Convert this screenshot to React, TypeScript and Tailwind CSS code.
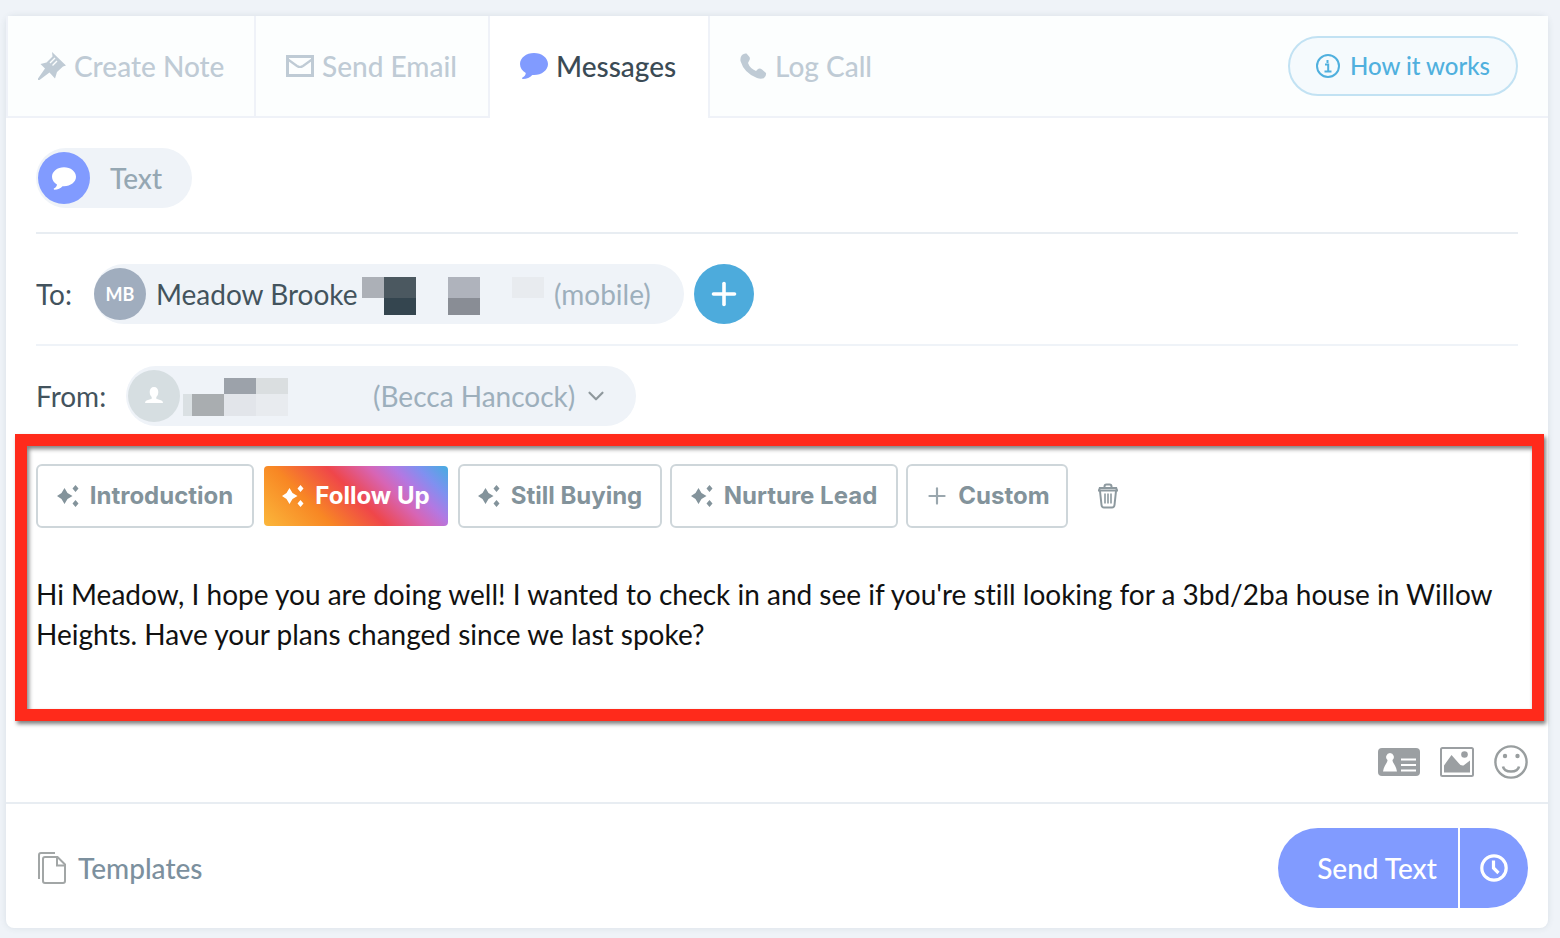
import { useState } from 'react';
import { ChevronDown, Plus } from 'lucide-react';

const TABS = [
  { label: 'Create Note', width: 'w-[250px] border-l-2' },
  { label: 'Send Email', width: 'w-[234px]' },
  { label: 'Messages', width: 'w-[220px]' },
  { label: 'Log Call', width: '' },
];

const PROMPTS = [
  { label: 'Introduction', width: 'w-[218px]' },
  { label: 'Follow Up', width: 'w-[188px]' },
  { label: 'Still Buying', width: 'w-[204px]' },
  { label: 'Nurture Lead', width: 'w-[228px]' },
];

const MESSAGE =
  "Hi Meadow, I hope you are doing well! I wanted to check in and see if you're still looking for a 3bd/2ba house in Willow Heights. Have your plans changed since we last spoke?";

const Pin = () => (
  <svg width="28" height="28" viewBox="0 0 28 28" fill="currentColor">
    <path d="M14 0l14 13.500-3 1-6 5.500-2 6.500-5.500-6L1.500 28H0v-1.500l7-10L2.500 12l6-1.500 6-6z" />
    <path d="M12 11l5-5M14.500 13.500l4.500-4.500" stroke="#fcfefe" strokeWidth="1.400" />
  </svg>
);

const Envelope = () => (
  <svg width="28" height="22" viewBox="0 0 28 22" fill="none" stroke="currentColor" strokeWidth="3">
    <path d="M1.500 1.500h25v19h-25z" />
    <path d="M2 4.500l9 6.500q3 2 6 0l9-6.500" strokeWidth="2.200" />
  </svg>
);

const Bubble = ({ className }: { className: string }) => (
  <svg viewBox="0 0 28 26" fill="currentColor" className={className}>
    <path d="M14 0C6.300 0 0 4.900 0 11c0 3.900 2.300 7 5.800 9-.2 2-1.300 3.700-3.600 4.800-.4.500-.1 1.200.6 1.200 4 0 7.200-1.200 9.500-4h1.700c7.700 0 14-4.900 14-11S21.700 0 14 0z" />
  </svg>
);

const Phone = () => (
  <svg width="27" height="27" viewBox="0 0 27 27" fill="currentColor">
    <path d="M2 2Q4 0 6.500.5L9.500 4Q10.500 6 9 8L8 10Q10 15.500 16 18L18 16Q20 15 22 16.500L26 20Q26.500 23 24 25 21 26.500 17 25 4 20 .5 8 0 4 2 2z" />
  </svg>
);

const Sparkles = () => (
  <svg width="23" height="22" viewBox="0 0 23 22" fill="currentColor">
    <path d="M7.500 3l3 5 5 3-5 3-3 5-3-5-4.500-3 4.500-3z" />
    <path d="M18.500 0l3 3.500-3 3.500-3-3.500zM18.500 15l3 3.500-3 3.500-3-3.500z" />
  </svg>
);

const Trash = () => (
  <svg width="22" height="26" viewBox="0 0 22 26" fill="none" stroke="currentColor" strokeWidth="2">
    <path d="M1 7.500h20M2 7.500l.8-2.500h16.400l.8 2.500M7.500 5V3.500q0-2 2-2h3q2 0 2 2V5" />
    <path d="M3 8l1.500 14q.3 2.500 2.500 2.500h8q2.200 0 2.500-2.500L19 8" />
    <path d="M8 10.500v10M11 10.500v10M14 10.500v10" strokeWidth="1.600" />
  </svg>
);

const ContactCard = () => (
  <svg width="42" height="28" viewBox="0 0 42 28">
    <rect width="42" height="28" rx="4" fill="#9b9fa2" />
    <path d="M12 5a4 4 0 0 1 2.500 7c-.3 2.500 3.500 5 4.500 11.500H5C6 17 9.800 14.500 9.500 12A4 4 0 0 1 12 5z" fill="#fff" />
    <path d="M23 11.500h15M23 17h15M23 22.500h15" stroke="#fff" strokeWidth="2" />
  </svg>
);

const Picture = () => (
  <svg width="34" height="30" viewBox="0 0 34 30">
    <rect x="1" y="1" width="32" height="28" rx="1.500" fill="none" stroke="#9b9fa2" strokeWidth="2" />
    <circle cx="24.500" cy="7.500" r="3.300" fill="#9b9fa2" />
    <path d="M4 25.500v-7L11.500 8l7.500 8.500q1.500 2.500 4.500 2l6.500-5v12z" fill="#9b9fa2" />
  </svg>
);

const Smiley = () => (
  <svg width="34" height="34" viewBox="0 0 34 34" fill="none" stroke="#999e9f" strokeWidth="2.400">
    <circle cx="17" cy="17" r="15.600" />
    <circle cx="11" cy="11" r="2.200" fill="#999e9f" stroke="none" />
    <circle cx="23.500" cy="11" r="2.200" fill="#999e9f" stroke="none" />
    <path d="M9 21.500q1 5 8 5t8-5" strokeWidth="2.600" />
  </svg>
);

const Documents = () => (
  <svg width="28" height="32" viewBox="0 0 28 32" fill="none" stroke="#a2a6a6" strokeWidth="2">
    <path d="M1 27V3q0-2 2-2h14" />
    <path d="M7 5h12.500l7.500 7.500V29q0 2-2 2H7q-2 0-2-2V7q0-2 2-2z" />
    <path d="M19 5v8.500h8" />
  </svg>
);

const TabIcon = ({ label }: { label: string }) => {
  if (label === 'Create Note') return <Pin />;
  if (label === 'Send Email') return <Envelope />;
  if (label === 'Messages') return <Bubble className="w-7 h-[26px] text-[#819bff]" />;
  return <Phone />;
};

export default function App() {
  const [tab, setTab] = useState('Messages');
  const [prompt, setPrompt] = useState('Follow Up');
  const [text, setText] = useState(MESSAGE);

  return (
    <div className="min-h-screen bg-[#eff3f8] pt-4 pb-2.5 pl-1.5 pr-3 font-[Lato,sans-serif] text-[28px] leading-10 [font-variant-ligatures:none]">
      <main className="bg-white rounded-lg shadow-[0_0_6px_rgba(60,80,100,0.12)]">
        <nav className="flex h-[102px]">
          {TABS.map((t) => (
            <button
              key={t.label}
              onClick={() => setTab(t.label)}
              className={`flex items-center gap-2 pl-[30px] font-medium border-[#eff2f8] ${t.width} ${t.label === 'Log Call' ? 'grow' : 'border-r-2'} ${
                t.label === tab ? 'pb-0.5 text-[#3b4b55]' : 'bg-[#fcfefe] border-b-2 text-[#bfcbd5]'
              }`}
            >
              <TabIcon label={t.label} />
              {t.label}
            </button>
          ))}
          <div className="flex items-center pr-[30px] bg-[#fcfefe] border-b-2 border-[#eff2f8]">
            <button className="flex items-center justify-center gap-2.5 w-[230px] h-[60px] rounded-full border-2 border-[#c2e2f3] bg-[#f5fafd] text-[#50b0de] text-2xl font-medium">
              <svg width="24" height="24" viewBox="0 0 24 24" fill="none" stroke="currentColor" strokeWidth="2">
                <circle cx="12" cy="12" r="11" />
                <path d="M9 10.500h3.200V17M8.500 17.500h7M11.500 6v3" />
              </svg>
              How it works
            </button>
          </div>
        </nav>

        <div className="px-[30px]">
          <div className="pt-[30px] pb-6 border-b-2 border-[#e8edf2]">
            <button className="flex items-center gap-5 h-[60px] pl-0.5 pr-[30px] rounded-full bg-[#eff3f8] text-[#95a7b3] font-medium">
              <span className="flex items-center justify-center size-[52px] rounded-full bg-[#819bff] text-white">
                <Bubble className="w-6 h-[23px]" />
              </span>
              Text
            </button>
          </div>

          <div className="flex items-center pt-[30px] pb-5 border-b-2 border-[#eff3f8] text-[#43535d]">
            <span className="w-[58px]">To:</span>
            <div className="flex items-center w-[590px] h-[60px] rounded-full bg-[#eff3f8]">
              <span className="flex items-center justify-center size-[52px] rounded-full bg-[#a0adbe] text-white text-lg font-bold">MB</span>
              <span className="w-[216px] pl-2.5 whitespace-nowrap">Meadow Brooke</span>
              <div className="grid grid-cols-[22px_32px_32px_32px_32px_32px] grid-rows-[21px_17px] mt-1">
                <i className="bg-[#acb0b7]" />
                <i className="bg-[#4b5860]" />
                <i />
                <i className="bg-[#afb3bc]" />
                <i />
                <i className="bg-[#e8ebef]" />
                <i />
                <i className="bg-[#34454f]" />
                <i />
                <i className="bg-[#898d95]" />
              </div>
              <span className="pl-2.5 text-[#9dafbc]">(mobile)</span>
            </div>
            <button aria-label="Add recipient" className="flex items-center justify-center size-[60px] ml-2.5 rounded-full bg-[#4dabdc] text-white">
              <Plus size={36} strokeWidth={2.400} />
            </button>
          </div>

          <div className="flex items-center pt-5 text-[#43535d]">
            <span className="w-[90px]">From:</span>
            <button className="flex items-center w-[510px] h-[60px] pl-0.5 rounded-full bg-[#eff3f8] text-[#9dafbc]">
              <span className="flex items-center justify-center size-[52px] rounded-full bg-[#d6dee1] text-white">
                <svg width="18" height="18" viewBox="0 0 18 18" fill="currentColor">
                  <path d="M9 0c2.800 0 4.300 2 4.300 5 0 2.300-.8 4-2 5v1.700l5.200 1.800q1.500.6 1.500 2.500H0q0-1.900 1.500-2.500l5.200-1.800V10c-1.200-1-2-2.700-2-5 0-3 1.500-5 4.300-5z" />
                </svg>
              </span>
              <div className="grid grid-cols-[9px_32px_32px_32px] grid-rows-[16px_22px] ml-[3px] mt-0.5">
                <i />
                <i />
                <i className="bg-[#9ca2aa]" />
                <i className="bg-[#dadee0]" />
                <i className="bg-[#dae0e3]" />
                <i className="bg-[#a9adb0]" />
                <i className="bg-[#e2e5ea]" />
                <i className="bg-[#e8ebef]" />
              </div>
              <span className="pl-[85px] pr-2">(Becca Hancock)</span>
              <ChevronDown size={26} strokeWidth={2} className="text-[#8f989d]" />
            </button>
          </div>
        </div>

        <section className="mt-2 ml-[9px] mr-1 border-[12px] border-[#ff2a1b] pl-[9px] pr-4 pt-[18px] pb-4 shadow-[2px_3px_4px_rgba(0,0,0,0.5),inset_2px_3px_4px_rgba(0,0,0,0.5)]">
          <div className="flex items-center gap-2 font-[Inter,sans-serif] text-2xl font-bold text-[#83939b]">
            {PROMPTS.map((p) => (
              <button
                key={p.label}
                onClick={() => setPrompt(p.label)}
                className={`flex items-center justify-center gap-2.5 h-16 rounded-md border-2 ${p.width} ${
                  p.label === prompt
                    ? 'border-transparent bg-clip-padding bg-origin-padding text-white bg-[linear-gradient(45deg,#fbb73b_0%,#f88724_28%,#ef464a_50%,#d765b5_67%,#b378e2_77%,#8090f0_87%,#45ade0_100%)]'
                    : 'border-[#ced6da]'
                }`}
              >
                <Sparkles />
                {p.label}
              </button>
            ))}
            <button className="flex items-center justify-center gap-2 w-[162px] h-16 rounded-md border-2 border-[#ced6da]">
              <Plus size={26} strokeWidth={2} className="text-[#9aa7ae]" />
              Custom
            </button>
            <button aria-label="Delete" className="ml-[21px] text-[#8d999f]">
              <Trash />
            </button>
          </div>
          <textarea
            aria-label="Message"
            value={text}
            onChange={(e) => setText(e.target.value)}
            className="block w-full h-[119px] mt-[46px] resize-none outline-none bg-transparent text-[#111]"
          />
        </section>

        <div className="flex items-center justify-end gap-5 h-[83px] pr-5 border-b-2 border-[#e8edf2]">
          <button aria-label="Contact card"><ContactCard /></button>
          <button aria-label="Image"><Picture /></button>
          <button aria-label="Emoji"><Smiley /></button>
        </div>

        <footer className="flex items-center justify-between pt-6 pb-5 pl-8 pr-5 font-medium">
          <button className="flex items-center gap-3 text-[#7c909e]">
            <Documents />
            Templates
          </button>
          <div className="flex h-20 gap-0.5 text-white">
            <button className="w-[180px] pl-[18px] rounded-l-full bg-[#819bff]">Send Text</button>
            <button aria-label="Schedule" className="flex items-center justify-center w-[68px] rounded-r-full bg-[#819bff]">
              <svg width="28" height="28" viewBox="0 0 28 28" fill="none" stroke="currentColor" strokeWidth="3.200">
                <circle cx="14" cy="14" r="12.200" />
                <path d="M13.500 6.500V14l5 5" />
              </svg>
            </button>
          </div>
        </footer>
      </main>
    </div>
  );
}
